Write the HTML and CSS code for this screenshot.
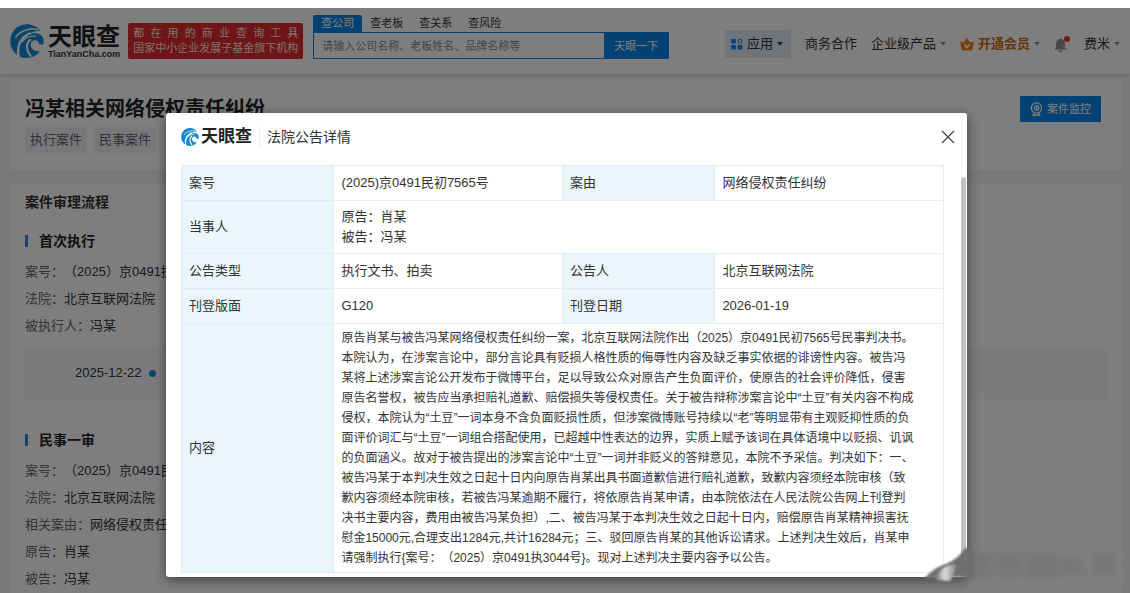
FILE: index.html
```html
<!DOCTYPE html>
<html lang="zh-CN">
<head>
  <meta charset="UTF-8">
  <meta name="viewport" content="width=device-width, initial-scale=1.0">
  <title>冯某相关网络侵权责任纠纷 - 天眼查</title>
  <link rel="stylesheet" href="styles.css">
</head>
<body>
  <svg class="defs" aria-hidden="true">
    <symbol id="logo-mark" viewBox="0 0 100 100">
      <path fill="#1187d6" d="M90 20 C70 -5 32 -6 12 18 C-8 43 0 82 30 96 C50 104 76 98 88 80 C78 82 68 78 63 70 C58 60 62 50 72 48 C80 47 85 52 86 60 L98 60 C102 44 94 30 80 28 C70 26 62 28 56 31 C64 23 76 19 90 20 Z"/>
      <path fill="none" stroke="#fff" stroke-width="4" d="M16 40 C30 20 56 10 84 17"/>
      <path fill="none" stroke="#fff" stroke-width="7" d="M26 98 C18 66 32 36 62 27"/>
      <path fill="none" stroke="#fff" stroke-width="6" d="M62 45 C48 52 44 74 62 96"/>
      <path fill="none" stroke="#fff" stroke-width="4" d="M34 54 C44 40 60 34 76 36"/>
    </symbol>
    <symbol id="caret" viewBox="0 0 6 4">
      <path fill="currentColor" d="M0 0 H6 L3 3.5 Z"/>
    </symbol>
  </svg>

  <div class="screen">
    <header class="topbar">
      <a class="logo" href="#">
        <svg class="logo-mark"><use href="#logo-mark"/></svg>
        <span class="logo-text">
          <span class="logo-name">天眼查</span>
          <span class="logo-domain">TianYanCha.com</span>
        </span>
      </a>
      <div class="slogan">
        <div class="slogan-line">都在用的商业查询工具</div>
        <div class="slogan-line">国家中小企业发展子基金旗下机构</div>
      </div>
      <form class="search">
        <div class="search-tabs">
          <button type="button" class="search-tab active">查公司</button>
          <button type="button" class="search-tab">查老板</button>
          <button type="button" class="search-tab">查关系</button>
          <button type="button" class="search-tab">查风险</button>
        </div>
        <div class="search-box">
          <input class="search-input" type="text" aria-label="搜索" placeholder="请输入公司名称、老板姓名、品牌名称等">
          <button type="button" class="search-btn">天眼一下</button>
        </div>
      </form>
      <nav class="nav">
        <a class="nav-app" href="#">
          <svg class="icon-app" viewBox="0 0 12 12">
            <rect x="0" y="1" width="5" height="4.500" rx="1" fill="#1a86ff"/>
            <rect x="0" y="7" width="5" height="4.500" rx="1" fill="#1a86ff"/>
            <rect x="6.500" y="7" width="5" height="4.500" rx="1" fill="#1a86ff"/>
            <circle cx="9" cy="3.200" r="1.900" fill="none" stroke="#1a86ff"/>
          </svg>
          应用
          <svg class="caret"><use href="#caret"/></svg>
        </a>
        <a class="nav-link" href="#">商务合作</a>
        <a class="nav-link" href="#">企业级产品 <svg class="caret light"><use href="#caret"/></svg></a>
        <a class="nav-link vip" href="#">
          <svg class="icon-crown" viewBox="0 0 14 13">
            <path fill="#e8861a" d="M0 3.500 L3.500 4.500 L7 0 L10.500 4.500 L14 3.500 L12.500 11 Q12.300 12.500 11 12.500 H3 Q1.700 12.500 1.500 11 Z"/>
            <path fill="none" stroke="#fff" stroke-width="1.500" d="M4.500 6.500 L7 9.500 L9.500 6.500"/>
          </svg>
          开通会员
          <svg class="caret light"><use href="#caret"/></svg>
        </a>
        <a class="nav-bell" href="#" aria-label="消息">
          <svg class="icon-bell" viewBox="0 0 16 17">
            <path fill="#8d9096" d="M6 3 Q6.500 2 7.500 3 Q11 4 11 8 V11.500 L12.500 13.500 H0.500 L2 11.500 V8 Q2 4 6 3 Z M4.500 14.500 H8.500 Q8 16 6.500 16 Q5 16 4.500 14.500 Z"/>
            <circle cx="13" cy="3" r="3" fill="#f0372c"/>
          </svg>
        </a>
        <a class="nav-link user" href="#">费米 <svg class="caret light"><use href="#caret"/></svg></a>
      </nav>
    </header>

    <main class="page">
      <section class="card summary">
        <div>
          <h1 class="case-title">冯某相关网络侵权责任纠纷</h1>
          <div class="tags">
            <span class="tag">执行案件</span>
            <span class="tag">民事案件</span>
          </div>
        </div>
        <button type="button" class="monitor-btn">
          <svg class="icon-monitor" viewBox="0 0 13 14" fill="none" stroke="#fff" stroke-width="1.200">
            <circle cx="6.500" cy="6" r="5.200"/>
            <circle cx="6.500" cy="6" r="2.300"/>
            <circle cx="6.500" cy="6" r="0.500"/>
            <path d="M4.500 10.800 L3 13.200 H10 L8.500 10.800"/>
          </svg>
          案件监控
        </button>
      </section>

      <section class="card process">
        <h2 class="section-title">案件审理流程</h2>
        <h3 class="stage-title">首次执行</h3>
        <dl class="facts">
          <div><dt>案号：</dt><dd>（2025）京0491执</dd></div>
          <div><dt>法院：</dt><dd>北京互联网法院</dd></div>
          <div><dt>被执行人：</dt><dd>冯某</dd></div>
        </dl>
        <div class="timeline">
          <time>2025-12-22</time>
          <span class="dot"></span>
        </div>
        <h3 class="stage-title">民事一审</h3>
        <dl class="facts">
          <div><dt>案号：</dt><dd>（2025）京0491民</dd></div>
          <div><dt>法院：</dt><dd>北京互联网法院</dd></div>
          <div><dt>相关案由：</dt><dd>网络侵权责任纠</dd></div>
          <div><dt>原告：</dt><dd>肖某</dd></div>
          <div><dt>被告：</dt><dd>冯某</dd></div>
        </dl>
      </section>
    </main>

    <div class="overlay">
      <div class="modal" role="dialog" aria-labelledby="modal-title">
        <div class="modal-head">
          <svg class="modal-mark"><use href="#logo-mark"/></svg>
          <span class="modal-brand">天眼查</span>
          <h2 class="modal-title" id="modal-title">法院公告详情</h2>
          <button type="button" class="modal-close" aria-label="关闭">
            <svg viewBox="0 0 14 14"><path fill="none" stroke="#444" stroke-width="1.200" d="M1 1 L13 13 M13 1 L1 13"/></svg>
          </button>
        </div>
        <div class="modal-body">
          <table class="detail">
            <tr>
              <th>案号</th>
              <td>(2025)京0491民初7565号</td>
              <th>案由</th>
              <td>网络侵权责任纠纷</td>
            </tr>
            <tr class="parties">
              <th>当事人</th>
              <td colspan="3">原告：肖某<br>被告：冯某</td>
            </tr>
            <tr>
              <th>公告类型</th>
              <td>执行文书、拍卖</td>
              <th>公告人</th>
              <td>北京互联网法院</td>
            </tr>
            <tr>
              <th>刊登版面</th>
              <td>G120</td>
              <th>刊登日期</th>
              <td>2026-01-19</td>
            </tr>
            <tr class="content">
              <th>内容</th>
              <td colspan="3">
                原告肖某与被告冯某网络侵权责任纠纷一案，北京互联网法院作出（2025）京0491民初7565号民事判决书。<br>
                本院认为，在涉案言论中，部分言论具有贬损人格性质的侮辱性内容及缺乏事实依据的诽谤性内容。被告冯<br>
                某将上述涉案言论公开发布于微博平台，足以导致公众对原告产生负面评价，使原告的社会评价降低，侵害<br>
                原告名誉权，被告应当承担赔礼道歉、赔偿损失等侵权责任。关于被告辩称涉案言论中“土豆”有关内容不构成<br>
                侵权，本院认为“土豆”一词本身不含负面贬损性质，但涉案微博账号持续以“老”等明显带有主观贬抑性质的负<br>
                面评价词汇与“土豆”一词组合搭配使用，已超越中性表达的边界，实质上赋予该词在具体语境中以贬损、讥讽<br>
                的负面涵义。故对于被告提出的涉案言论中“土豆”一词并非贬义的答辩意见，本院不予采信。判决如下：一、<br>
                被告冯某于本判决生效之日起十日内向原告肖某出具书面道歉信进行赔礼道歉，致歉内容须经本院审核（致<br>
                歉内容须经本院审核，若被告冯某逾期不履行，将依原告肖某申请，由本院依法在人民法院公告网上刊登判<br>
                决书主要内容，费用由被告冯某负担）,二、被告冯某于本判决生效之日起十日内，赔偿原告肖某精神损害抚<br>
                慰金15000元,合理支出1284元,共计16284元；三、驳回原告肖某的其他诉讼请求。上述判决生效后，肖某申<br>
                请强制执行{案号：（2025）京0491执3044号}。现对上述判决主要内容予以公告。
              </td>
            </tr>
          </table>
          <span class="scroll-thumb"></span>
        </div>
      </div>
    </div>

    <svg class="watermark" viewBox="0 0 210 46" aria-hidden="true">
      <defs>
        <linearGradient id="curl" x1="0" y1="0" x2="1" y2="0">
          <stop offset="0" stop-color="#666"/>
          <stop offset="0.500" stop-color="#ddd"/>
          <stop offset="1" stop-color="#888"/>
        </linearGradient>
        <filter id="soft"><feGaussianBlur stdDeviation="1"/></filter>
        <filter id="softer"><feGaussianBlur stdDeviation="4"/></filter>
      </defs>
      <path filter="url(#soft)" fill="#707070" d="M4 36 Q14 24 26 21 Q38 16 46 4 L54 12 V34 H30 Z"/>
      <path filter="url(#soft)" fill="url(#curl)" d="M14 37 Q20 22 36 21 Q35 31 30 38 Z"/>
      <g filter="url(#softer)" fill="#666" opacity="0.300">
        <rect x="48" y="10" width="24" height="24"/>
        <rect x="78" y="10" width="24" height="24"/>
        <rect x="108" y="12" width="30" height="24"/>
        <rect x="142" y="14" width="20" height="18"/>
        <rect x="172" y="10" width="24" height="22"/>
      </g>
    </svg>
  </div>
</body>
</html>
```

FILE: styles.css
```css
* { box-sizing: border-box; }
html, body {
  margin: 0;
  height: 100%;
}
body {
  display: flex;
  flex-direction: column;
  padding-top: 8px;
  background: #fff;
  font-family: "Liberation Sans", "Noto Sans CJK SC", sans-serif;
  font-size: 13px;
  line-height: 20px;
  color: #333;
  text-spacing-trim: space-all;
}
a {
  color: inherit;
  text-decoration: none;
}
button, input {
  margin: 0;
  padding: 0;
  border: none;
  background: none;
  font: inherit;
  color: inherit;
}
button { cursor: pointer; }
h1, h2, h3, dl, dd { margin: 0; }
svg { flex-shrink: 0; }
.defs {
  position: absolute;
  width: 0;
  height: 0;
}
.screen {
  position: relative;
  flex: 1;
  min-height: 0;
  overflow: hidden;
  background: #f3f3f4;
}

/* top bar */
.topbar {
  display: flex;
  align-items: center;
  height: 66px;
  padding: 0 10px;
  background: #fcfcfc;
  box-shadow: 0 1px 3px rgba(0,0,0,0.15);
}
.logo {
  display: flex;
  align-items: center;
  gap: 4px;
  margin-right: 8px;
}
.logo-mark {
  width: 34px;
  height: 34px;
}
.logo-text {
  display: flex;
  flex-direction: column;
}
.logo-name {
  font-size: 24px;
  font-weight: bold;
  line-height: 26px;
  color: #222;
}
.logo-domain {
  font-size: 9px;
  font-weight: bold;
  line-height: 9px;
}
.slogan {
  margin-right: 10px;
  padding: 3px 5px;
  border-radius: 2px;
  background: #dc2a2e;
  color: #ffe2d8;
  font-size: 11px;
  line-height: 15px;
}
.slogan-line {
  text-align: justify;
  text-align-last: justify;
  white-space: nowrap;
}
.search {
  width: 356px;
  font-size: 11px;
  margin-bottom: 8px;
}
.search-tabs { display: flex; }
.search-tab {
  padding: 0 8px;
  line-height: 17px;
}
.search-tab.active {
  border-radius: 2px 2px 0 0;
  background: #0a84e8;
  color: #fff;
}
.search-box {
  display: flex;
  height: 27px;
  border: 1px solid #0a84e8;
}
.search-input {
  flex: 1;
  min-width: 0;
  padding: 0 8px;
}
.search-input::placeholder { color: #888; }
.search-btn {
  width: 64px;
  background: #0a84e8;
  color: #fff;
}
.nav {
  display: flex;
  align-items: center;
  margin-left: auto;
  padding-top: 6px;
  gap: 14px;
  white-space: nowrap;
}
.nav-app {
  display: flex;
  align-items: center;
  gap: 4px;
  padding: 4px 8px 4px 6px;
  background: #dcecf8;
}
.icon-app {
  width: 12px;
  height: 12px;
}
.nav-link {
  display: flex;
  align-items: center;
  gap: 4px;
}
.vip {
  color: #c96a10;
  font-weight: bold;
}
.icon-crown {
  width: 14px;
  height: 13px;
}
.caret {
  width: 6px;
  height: 4px;
}
.caret.light { color: #888; }
.nav-bell { display: flex; }
.icon-bell {
  width: 16px;
  height: 17px;
}

/* page behind the dialog */
.page {
  display: flex;
  flex-direction: column;
  gap: 14px;
  padding: 6px 7px 0 11px;
}
.card { background: #fdfdfd; }
.summary {
  display: flex;
  justify-content: space-between;
  align-items: flex-start;
  padding: 16px 22px 17px 14px;
}
.case-title {
  font-size: 20px;
  line-height: 27px;
  color: #222;
}
.tags {
  display: flex;
  gap: 7px;
  margin-top: 4px;
}
.tag {
  padding: 3px 5px;
  background: #f0f1f6;
  color: #60646c;
}
.monitor-btn {
  display: flex;
  align-items: center;
  gap: 4px;
  height: 26px;
  padding: 0 10px;
  border-radius: 1px;
  background: #0a84e8;
  color: #fff;
  font-size: 11px;
}
.icon-monitor {
  width: 13px;
  height: 14px;
}
.process {
  padding: 8px 14px 20px;
}
.section-title {
  font-size: 14px;
  line-height: 20px;
}
.stage-title {
  display: flex;
  align-items: center;
  gap: 11px;
  margin: 18px 0 6px;
  font-size: 14px;
  line-height: 22px;
  color: #222;
}
.stage-title::before {
  content: "";
  width: 3px;
  height: 12px;
  background: #2f86e6;
}
.facts > div {
  display: flex;
  line-height: 27px;
  white-space: nowrap;
}
.facts dt { color: #666; }
.timeline {
  display: flex;
  align-items: center;
  gap: 7px;
  height: 52px;
  margin: 8px 0 30px;
  padding-left: 50px;
  background: #f6f7fa;
}
.dot {
  width: 7px;
  height: 7px;
  border-radius: 50%;
  background: #1c8adb;
}

/* dialog */
.overlay {
  position: absolute;
  inset: 0;
  display: flex;
  align-items: flex-start;
  padding: 105px 163px 0 166px;
  background: rgba(0,0,0,0.5);
}
.modal {
  flex: 1;
  min-width: 0;
  border-radius: 3px;
  background: #fff;
  box-shadow: 0 3px 12px rgba(0,0,0,0.5);
}
.modal-head {
  display: flex;
  align-items: center;
  height: 52px;
  padding: 0 12px 4px 15px;
}
.modal-mark {
  width: 18px;
  height: 18px;
}
.modal-brand {
  margin-left: 2px;
  font-size: 17px;
  font-weight: bold;
  color: #222;
}
.modal-title {
  margin-left: 7px;
  padding-left: 7px;
  border-left: 1px solid #eee;
  font-size: 14px;
  font-weight: normal;
}
.modal-close {
  display: flex;
  margin-left: auto;
}
.modal-close svg {
  width: 14px;
  height: 14px;
}
.modal-body {
  position: relative;
  padding: 0 23px 4px 15px;
}
.detail {
  width: 100%;
  table-layout: fixed;
  border-collapse: collapse;
}
.detail th, .detail td {
  padding: 7px;
  border: 1px solid #e2eef2;
  text-align: left;
  font-weight: normal;
}
.detail th {
  width: 20%;
  background: #eaf6fa;
}
.detail td { width: 30%; }
.detail .parties td {
  padding-top: 6px;
  padding-bottom: 6px;
}
.detail .content td {
  padding-top: 4px;
  padding-bottom: 4px;
  font-size: 12px;
  white-space: nowrap;
}
.scroll-thumb {
  position: absolute;
  top: 12px;
  right: 1px;
  bottom: 0;
  width: 5px;
  border-radius: 3px 3px 0 0;
  background: #c1c1c1;
}
.watermark {
  position: absolute;
  right: 0;
  bottom: 4px;
  width: 210px;
  height: 46px;
}
```
